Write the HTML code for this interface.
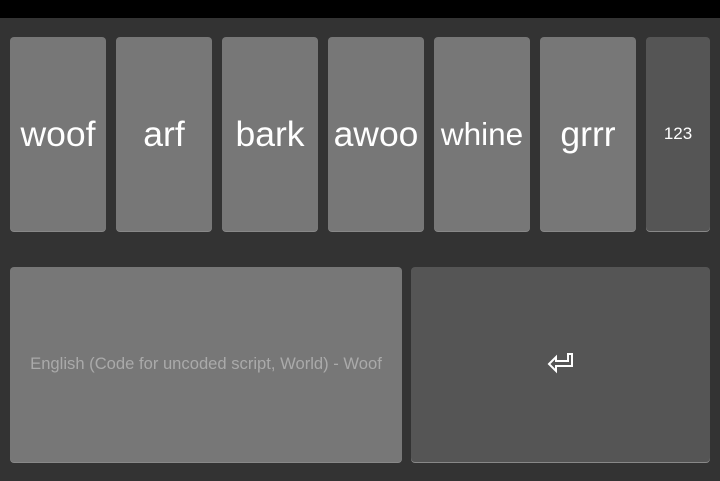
<html><head><style>
body{margin:0;width:720px;height:481px;background:#333;position:relative;overflow:hidden;font-family:"Liberation Sans",sans-serif}
.top{position:absolute;left:0;top:0;width:720px;height:18px;background:#000}
.k{position:absolute;top:37px;height:194px;width:96px;background:#777;border-radius:4px;color:#fff;font-size:35.5px;display:flex;align-items:center;justify-content:center;box-shadow:0 1px 0 #888}
</style></head><body>
<div class="top"></div>
<div class="k" style="left:10px">woof</div>
<div class="k" style="left:116px">arf</div>
<div class="k" style="left:222px">bark</div>
<div class="k" style="left:328px">awoo</div>
<div class="k" style="left:434px;font-size:31.5px">whine</div>
<div class="k" style="left:540px">grrr</div>
<div class="k" style="left:646px;width:64px;background:#555;font-size:17px">123</div>
<div class="k" style="left:10px;top:267px;height:195px;width:392px;font-size:16.6px;color:#aaa;padding-bottom:2px;box-sizing:border-box">English (Code for uncoded script, World) - Woof</div>
<div class="k" style="left:411px;top:267px;height:195px;width:299px;background:#555">
<svg width="720" height="481" style="position:absolute;left:-411px;top:-267px"><path d="M549,364 L556,357 L556,361 L568,361 L568,354 L572,354 L572,366 L556,366 L556,371 Z" fill="none" stroke="#fff" stroke-width="2" stroke-linejoin="miter"/></svg>
</div>
</body></html>
